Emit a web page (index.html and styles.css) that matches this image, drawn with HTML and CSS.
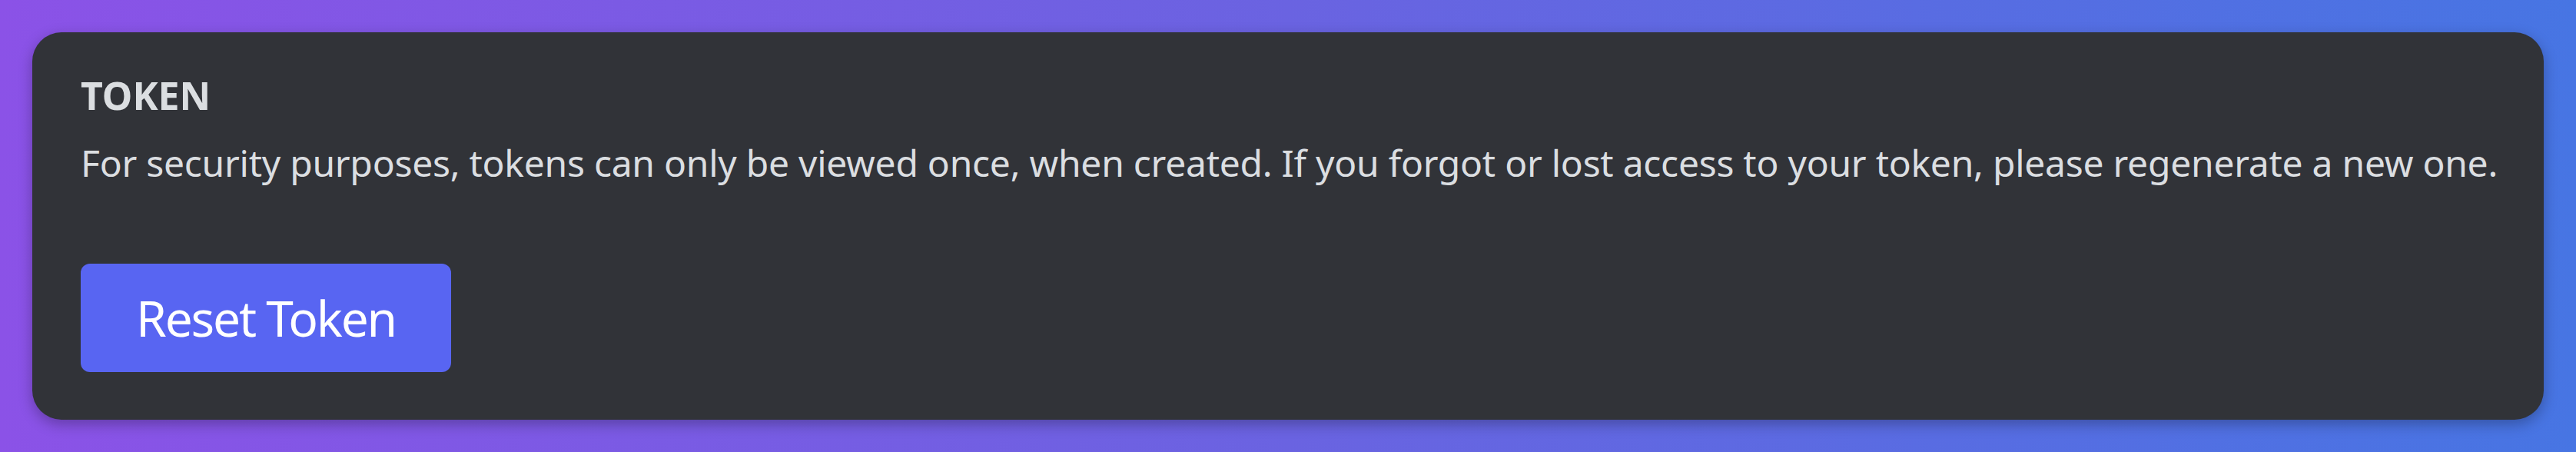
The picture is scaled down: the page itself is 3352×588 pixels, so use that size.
FILE: index.html
```html
<!DOCTYPE html>
<html lang="en">

<head>
    <meta charset="UTF-8">
    <meta name="viewport" content="width=device-width, initial-scale=1.0">
    <title>Token</title>
    <link rel="stylesheet" href="styles.css">
</head>

<body>
    <div class="card">
        <h2 class="card-title">TOKEN</h2>
        <p class="card-text">For security purposes, tokens can only be viewed once, when created. If you forgot or lost access to your token, please regenerate a new one.</p>
        <!-- Nút tạo lại token -->
        <button class="btn-reset" type="button">Reset Token</button>
    </div>
</body>

</html>
```
FILE: styles.css
```css
html,
body {
    margin: 0;
    height: 100%;
}

body {
    box-sizing: border-box;
    padding: 42px;
    background: linear-gradient(90deg, #8b52e7 0%, #6a63e1 50%, #4775e3 100%);
    font-family: "Noto Sans", "Liberation Sans", sans-serif;
}

.card {
    box-sizing: border-box;
    height: 504px;
    padding: 52px 60px 0 63px;
    background-color: #313338;
    border-radius: 38px;
    box-shadow: 0 6px 18px rgba(0, 0, 0, 0.28);
}

.card-title {
    margin: 0;
    font-size: 50px;
    line-height: 60px;
    font-weight: 700;
    color: #dbdee1;
}

.card-text {
    margin: 28px 0 0;
    font-size: 48px;
    line-height: 60px;
    letter-spacing: -0.26px;
    color: #dbdee1;
    white-space: nowrap;
}

/* Nút Reset Token */
.btn-reset {
    display: flex;
    align-items: center;
    justify-content: center;
    width: 482px;
    height: 141px;
    margin-top: 101px;
    padding: 0;
    font-family: inherit;
    font-size: 64px;
    letter-spacing: -2.2px;
    color: #fff;
    background-color: #5865f2;
    border: none;
    border-radius: 12px;
    cursor: pointer;
}

.btn-reset:hover {
    background-color: #4752c4;
}
```
